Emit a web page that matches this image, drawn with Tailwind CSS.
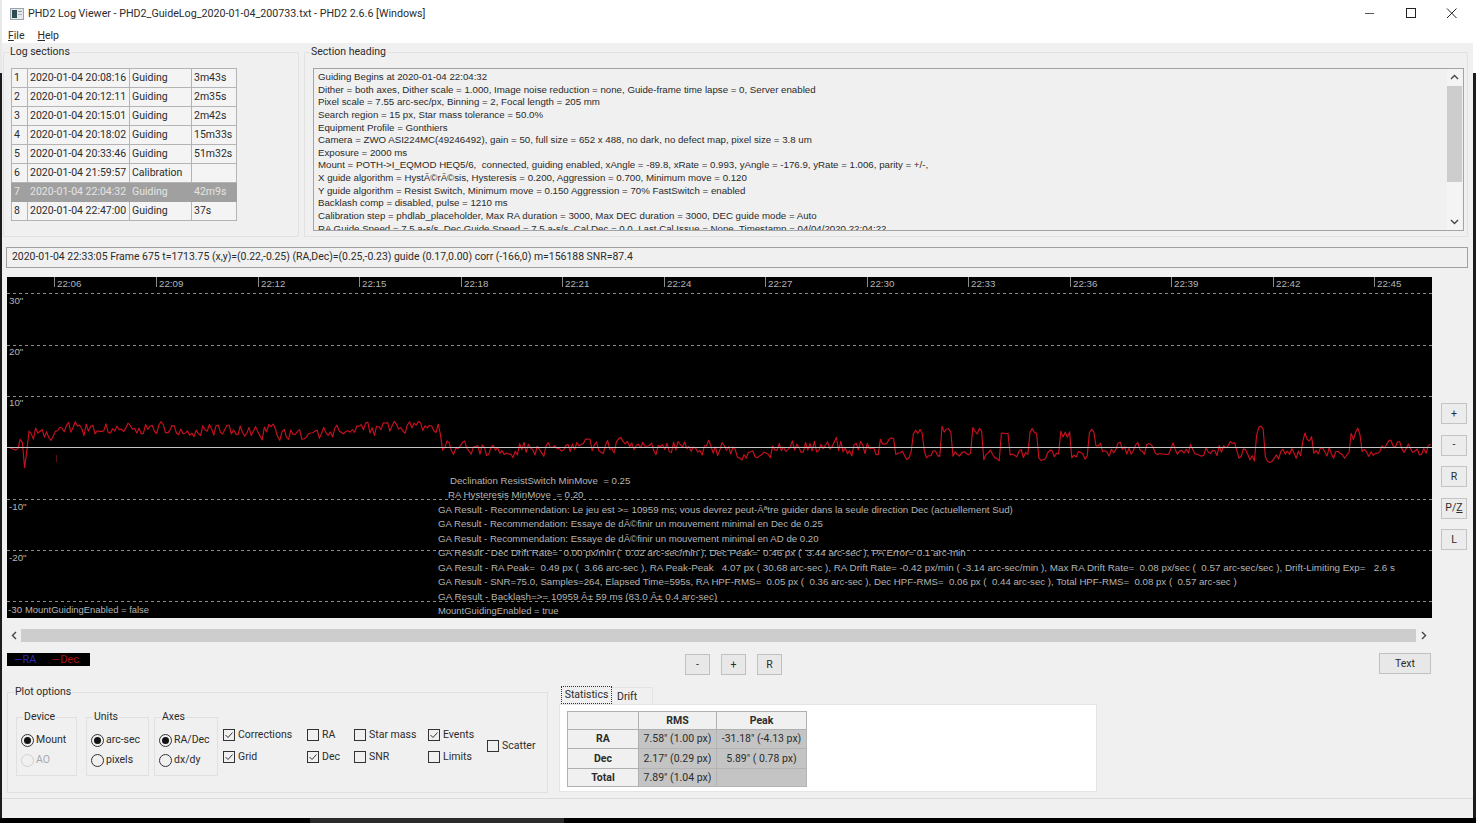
<!DOCTYPE html>
<html lang="en">
<head>
<meta charset="utf-8">
<title>PHD2 Log Viewer</title>
<script src="https://cdn.jsdelivr.net/npm/@tailwindcss/browser@4"></script>
</head>
<body class="m-0 overflow-hidden bg-black">
<div class="w-[1476px] h-[823px] flex flex-col overflow-hidden font-['Roboto','Open_Sans',sans-serif] text-[10.5px] text-[#2c2c2c]">
  <div class="flex h-[818px]">
    <div class="w-[2px] flex flex-col"><div class="h-[73px] bg-[#e8e8e8]"></div><div class="flex-1 bg-[#1c1c1c]"></div></div>
    <div class="w-[1471px] bg-[#f0f0f0] flex flex-col">
      <!-- title bar -->
      <div class="h-[27px] bg-white flex items-center pl-[8px] shrink-0">
        <svg class="w-[14px] h-[12px] mr-[4px]" viewBox="0 0 14 12"><rect x="0.5" y="0.5" width="13" height="11" fill="#e4e8ea" stroke="#9aa4aa"/><rect x="2" y="2" width="5" height="8" fill="#2d4a52"/><rect x="8" y="3" width="4" height="1" fill="#8a98a0"/><rect x="8" y="6" width="4" height="1" fill="#a8b2b8"/></svg>
        <span class="leading-[27px] text-[10.7px]">PHD2 Log Viewer - PHD2_GuideLog_2020-01-04_200733.txt - PHD2 2.6.6 [Windows]</span>
        <div class="ml-auto flex items-center">
          <svg class="w-[11px] h-[11px] mr-[30px]" viewBox="0 0 11 11"><path d="M1 5.5h9" stroke="#555" stroke-width="1"/></svg>
          <svg class="w-[11px] h-[11px] mr-[30px]" viewBox="0 0 11 11"><rect x="1.5" y="0.5" width="9" height="9" fill="none" stroke="#222"/></svg>
          <svg class="w-[11px] h-[11px] mr-[16px]" viewBox="0 0 11 11"><path d="M1 0.5l9.5 9.5M10.5 0.5L1 10" stroke="#222" fill="none"/></svg>
        </div>
      </div>
      <!-- menu -->
      <div class="h-[16px] bg-white flex gap-[13px] pl-[6px] leading-[17px] shrink-0">
        <span><u>F</u>ile</span><span><u>H</u>elp</span>
      </div>
      <!-- sections -->
      <div class="flex mt-[9px] h-[185px] shrink-0 pl-[1px]">
        <div class="relative w-[296px] border border-[#e2e2e2] rounded-[1px]">
          <span class="absolute left-[5px] top-[-8px] bg-[#f0f0f0] px-[1px] leading-[14px]">Log sections</span>
          <table class="absolute left-[7px] top-[15px] border-collapse table-fixed w-[225px] bg-[#f4f4f4] leading-[18px] whitespace-nowrap">
            <colgroup><col class="w-[16px]"><col class="w-[102px]"><col class="w-[62px]"><col class="w-[45px]"></colgroup>
            <tbody>
              <tr class="h-[19px]"><td class="border border-[#b4b4b4] px-[2px]">1</td><td class="border border-[#b4b4b4] px-[2px]">2020-01-04 20:08:16</td><td class="border border-[#b4b4b4] px-[2px]">Guiding</td><td class="border border-[#b4b4b4] px-[2px]">3m43s</td></tr>
              <tr class="h-[19px]"><td class="border border-[#b4b4b4] px-[2px]">2</td><td class="border border-[#b4b4b4] px-[2px]">2020-01-04 20:12:11</td><td class="border border-[#b4b4b4] px-[2px]">Guiding</td><td class="border border-[#b4b4b4] px-[2px]">2m35s</td></tr>
              <tr class="h-[19px]"><td class="border border-[#b4b4b4] px-[2px]">3</td><td class="border border-[#b4b4b4] px-[2px]">2020-01-04 20:15:01</td><td class="border border-[#b4b4b4] px-[2px]">Guiding</td><td class="border border-[#b4b4b4] px-[2px]">2m42s</td></tr>
              <tr class="h-[19px]"><td class="border border-[#b4b4b4] px-[2px]">4</td><td class="border border-[#b4b4b4] px-[2px]">2020-01-04 20:18:02</td><td class="border border-[#b4b4b4] px-[2px]">Guiding</td><td class="border border-[#b4b4b4] px-[2px]">15m33s</td></tr>
              <tr class="h-[19px]"><td class="border border-[#b4b4b4] px-[2px]">5</td><td class="border border-[#b4b4b4] px-[2px]">2020-01-04 20:33:46</td><td class="border border-[#b4b4b4] px-[2px]">Guiding</td><td class="border border-[#b4b4b4] px-[2px]">51m32s</td></tr>
              <tr class="h-[19px]"><td class="border border-[#b4b4b4] px-[2px]">6</td><td class="border border-[#b4b4b4] px-[2px]">2020-01-04 21:59:57</td><td class="border border-[#b4b4b4] px-[2px]">Calibration</td><td class="border border-[#b4b4b4] px-[2px]"></td></tr>
              <tr class="h-[19px] bg-[#a0a0a0] text-[#e4e4e4]"><td class="border border-[#a0a0a0] px-[2px]">7</td><td class="border border-[#a0a0a0] px-[2px]">2020-01-04 22:04:32</td><td class="border border-[#a0a0a0] px-[2px]">Guiding</td><td class="border border-[#a0a0a0] px-[2px]">42m9s</td></tr>
              <tr class="h-[19px]"><td class="border border-[#b4b4b4] px-[2px]">8</td><td class="border border-[#b4b4b4] px-[2px]">2020-01-04 22:47:00</td><td class="border border-[#b4b4b4] px-[2px]">Guiding</td><td class="border border-[#b4b4b4] px-[2px]">37s</td></tr>
            </tbody>
          </table>
        </div>
        <div class="relative ml-[5px] w-[1164px] border border-[#e2e2e2] rounded-[1px]">
          <span class="absolute left-[5px] top-[-8px] bg-[#f0f0f0] px-[1px] leading-[14px]">Section heading</span>
          <div class="absolute left-[8px] top-[15px] w-[1151px] h-[163px] border border-[#a4a4a4] bg-[#f0f0f0] flex overflow-hidden">
            <pre class="flex-1 pl-[4px] pt-[2px] font-['Liberation_Sans',Arial,sans-serif] text-[9.7px] leading-[12.62px] text-[#2a2a2a] overflow-hidden whitespace-pre">Guiding Begins at 2020-01-04 22:04:32
Dither = both axes, Dither scale = 1.000, Image noise reduction = none, Guide-frame time lapse = 0, Server enabled
Pixel scale = 7.55 arc-sec/px, Binning = 2, Focal length = 205 mm
Search region = 15 px, Star mass tolerance = 50.0%
Equipment Profile = Gonthiers
Camera = ZWO ASI224MC(49246492), gain = 50, full size = 652 x 488, no dark, no defect map, pixel size = 3.8 um
Exposure = 2000 ms
Mount = POTH-&gt;I_EQMOD HEQ5/6,  connected, guiding enabled, xAngle = -89.8, xRate = 0.993, yAngle = -176.9, yRate = 1.006, parity = +/-,
X guide algorithm = HystÃ©rÃ©sis, Hysteresis = 0.200, Aggression = 0.700, Minimum move = 0.120
Y guide algorithm = Resist Switch, Minimum move = 0.150 Aggression = 70% FastSwitch = enabled
Backlash comp = disabled, pulse = 1210 ms
Calibration step = phdlab_placeholder, Max RA duration = 3000, Max DEC duration = 3000, DEC guide mode = Auto
RA Guide Speed = 7.5 a-s/s, Dec Guide Speed = 7.5 a-s/s, Cal Dec = 0.0, Last Cal Issue = None, Timestamp = 04/04/2020 22:04:22</pre>
            <div class="w-[15px] mr-[1px] bg-[#f4f4f4] flex flex-col items-center shrink-0">
              <svg class="w-[9px] h-[17px] shrink-0" viewBox="0 0 9 17"><path d="M1 10l3.5-3.5L8 10" fill="none" stroke="#444" stroke-width="1.4"/></svg>
              <div class="w-full h-[96px] bg-[#cdcdcd]"></div>
              <svg class="w-[9px] h-[17px] mt-auto shrink-0" viewBox="0 0 9 17"><path d="M1 7l3.5 3.5L8 7" fill="none" stroke="#444" stroke-width="1.4"/></svg>
            </div>
          </div>
        </div>
      </div>
      <!-- status line -->
      <div class="mt-[10px] ml-[4px] w-[1462px] h-[21px] shrink-0 border border-[#a0a0a0] pl-[5px] leading-[18px] whitespace-pre text-[10.45px]">2020-01-04 22:33:05 Frame 675 t=1713.75 (x,y)=(0.22,-0.25) (RA,Dec)=(0.25,-0.23) guide (0.17,0.00) corr (-166,0) m=156188 SNR=87.4</div>
      <!-- chart row -->
      <div class="flex mt-[9px] h-[341px] shrink-0 pl-[5px]">
        <div class="relative w-[1425px] h-[341px] bg-black overflow-hidden font-['Liberation_Sans',Arial,sans-serif] text-[9.75px] leading-[14px] text-[#b4b4b4] whitespace-pre">
          <svg class="absolute inset-0 w-[1425px] h-[341px]" viewBox="0 0 1425 341">
            <g stroke="#8c8c8c" stroke-dasharray="3 3" stroke-width="1">
              <path d="M0 16.5H1425"/><path d="M0 68.5H1425"/><path d="M0 119.5H1425"/><path d="M0 222.5H1425"/><path d="M0 273.5H1425"/><path d="M0 324.5H1425"/>
            </g>
            <path d="M49.5 178v7" stroke="#5a1010" stroke-width="1"/>
            <polyline id="dec" fill="none" stroke="#c8101e" stroke-width="1.15" stroke-linejoin="round"/>
            <path d="M0 170.5H1425" stroke="#c4c4c4" stroke-width="1"/>
          </svg>
          <div class="absolute top-0 left-[47px] h-[10px] border-l border-[#8a8a8a] pl-[2px]">22:06</div>
          <div class="absolute top-0 left-[149px] h-[10px] border-l border-[#8a8a8a] pl-[2px]">22:09</div>
          <div class="absolute top-0 left-[251px] h-[10px] border-l border-[#8a8a8a] pl-[2px]">22:12</div>
          <div class="absolute top-0 left-[352px] h-[10px] border-l border-[#8a8a8a] pl-[2px]">22:15</div>
          <div class="absolute top-0 left-[454px] h-[10px] border-l border-[#8a8a8a] pl-[2px]">22:18</div>
          <div class="absolute top-0 left-[555px] h-[10px] border-l border-[#8a8a8a] pl-[2px]">22:21</div>
          <div class="absolute top-0 left-[657px] h-[10px] border-l border-[#8a8a8a] pl-[2px]">22:24</div>
          <div class="absolute top-0 left-[758px] h-[10px] border-l border-[#8a8a8a] pl-[2px]">22:27</div>
          <div class="absolute top-0 left-[860px] h-[10px] border-l border-[#8a8a8a] pl-[2px]">22:30</div>
          <div class="absolute top-0 left-[961px] h-[10px] border-l border-[#8a8a8a] pl-[2px]">22:33</div>
          <div class="absolute top-0 left-[1063px] h-[10px] border-l border-[#8a8a8a] pl-[2px]">22:36</div>
          <div class="absolute top-0 left-[1164px] h-[10px] border-l border-[#8a8a8a] pl-[2px]">22:39</div>
          <div class="absolute top-0 left-[1266px] h-[10px] border-l border-[#8a8a8a] pl-[2px]">22:42</div>
          <div class="absolute top-0 left-[1367px] h-[10px] border-l border-[#8a8a8a] pl-[2px]">22:45</div>
          <div class="absolute left-[2px] top-[17px]">30"</div>
          <div class="absolute left-[2px] top-[68px]">20"</div>
          <div class="absolute left-[2px] top-[119px]">10"</div>
          <div class="absolute left-[2px] top-[223px]">-10"</div>
          <div class="absolute left-[2px] top-[274px]">-20"</div>
          <div class="absolute left-[1px] top-[326px] w-[17px] overflow-hidden">-30</div>
          <div class="absolute left-[18px] top-[326px] text-[9.45px]">MountGuidingEnabled = false</div>
          <div class="absolute left-[443px] top-[197px] text-[9.68px]">Declination ResistSwitch MinMove  = 0.25</div>
          <div class="absolute left-[441px] top-[211px] text-[9.7px]">RA Hysteresis MinMove  = 0.20</div>
          <div class="absolute left-[431px] top-[226px] leading-[14.42px] whitespace-normal w-[990px]">
            <div class="whitespace-pre text-[9.76px]">GA Result - Recommendation: Le jeu est &gt;= 10959 ms; vous devrez peut-Ãªtre guider dans la seule direction Dec (actuellement Sud)</div>
            <div class="whitespace-pre text-[9.65px]">GA Result - Recommendation: Essaye de dÃ©finir un mouvement minimal en Dec de 0.25</div>
            <div class="whitespace-pre text-[9.65px]">GA Result - Recommendation: Essaye de dÃ©finir un mouvement minimal en AD de 0.20</div>
            <div class="whitespace-pre text-[9.8px]">GA Result - Dec Drift Rate=  0.00 px/min (  0.02 arc-sec/min ), Dec Peak=  0.46 px (  3.44 arc-sec ), PA Error= 0.1 arc-min</div>
            <div class="whitespace-pre text-[9.84px]">GA Result - RA Peak=  0.49 px (  3.66 arc-sec ), RA Peak-Peak   4.07 px ( 30.68 arc-sec ), RA Drift Rate= -0.42 px/min ( -3.14 arc-sec/min ), Max RA Drift Rate=  0.08 px/sec (  0.57 arc-sec/sec ), Drift-Limiting Exp=   2.6 s</div>
            <div class="whitespace-pre text-[9.68px]">GA Result - SNR=75.0, Samples=264, Elapsed Time=595s, RA HPF-RMS=  0.05 px (  0.36 arc-sec ), Dec HPF-RMS=  0.06 px (  0.44 arc-sec ), Total HPF-RMS=  0.08 px (  0.57 arc-sec )</div>
            <div class="whitespace-pre text-[9.86px]">GA Result - Backlash=&gt;= 10959 Â± 59 ms (83.0 Â± 0.4 arc-sec)</div>
            <div class="whitespace-pre text-[9.45px]">MountGuidingEnabled = true</div>
          </div>
        </div>
        <div class="ml-[9px] pt-[126px] flex flex-col gap-[10.5px]">
          <button class="w-[26px] h-[21px] border border-[#c4c4c4] bg-[#ececec] leading-[18px]">+</button>
          <button class="w-[26px] h-[21px] border border-[#c4c4c4] bg-[#ececec] leading-[18px]">-</button>
          <button class="w-[26px] h-[21px] border border-[#c4c4c4] bg-[#ececec] leading-[18px]">R</button>
          <button class="w-[26px] h-[21px] border border-[#c4c4c4] bg-[#ececec] leading-[18px]">P/<u>Z</u></button>
          <button class="w-[26px] h-[21px] border border-[#c4c4c4] bg-[#ececec] leading-[18px]">L</button>
        </div>
      </div>
      <!-- horizontal scrollbar -->
      <div class="mt-[11px] ml-[5px] w-[1425px] h-[13px] flex items-center shrink-0">
        <svg class="w-[14px] h-[13px] shrink-0" viewBox="0 0 14 13"><path d="M9 3L5.5 6.5 9 10" fill="none" stroke="#444" stroke-width="1.4"/></svg>
        <div class="w-[1395px] h-[13px] bg-[#cdcdcd]"></div>
        <svg class="w-[16px] h-[13px] shrink-0" viewBox="0 0 16 13"><path d="M6 3l3.5 3.5L6 10" fill="none" stroke="#444" stroke-width="1.4"/></svg>
      </div>
      <!-- legend + buttons -->
      <div class="flex mt-[11px] h-[24px] shrink-0 pl-[5px]">
        <div class="w-[83px] h-[13px] bg-black flex gap-[15px] pl-[7px] text-[11px] leading-[13px]">
          <span class="text-[#2a2ab4]">—RA</span><span class="text-[#a81010]">—Dec</span>
        </div>
        <button class="ml-[595px] mt-[1px] w-[25px] h-[21px] border border-[#c0c0c0] bg-[#e8e8e8] leading-[18px]">-</button>
        <button class="ml-[11px] mt-[1px] w-[25px] h-[21px] border border-[#c0c0c0] bg-[#e8e8e8] leading-[18px]">+</button>
        <button class="ml-[11px] mt-[1px] w-[25px] h-[21px] border border-[#c0c0c0] bg-[#e8e8e8] leading-[18px]">R</button>
        <button class="ml-[597px] w-[52px] h-[21px] border border-[#c0c0c0] bg-[#e8e8e8] leading-[18px]">Text</button>
      </div>
      <!-- lower row -->
      <div class="flex mt-[9px] h-[107px] shrink-0 pl-[5px]">
        <!-- plot options -->
        <div class="relative mt-[6px] w-[541px] h-[101px] border border-[#e0e0e0]">
          <span class="absolute left-[6px] top-[-8px] bg-[#f0f0f0] px-[1px] leading-[14px]">Plot options</span>
          <div class="absolute left-[8px] top-[24px] flex items-start">
            <div class="relative w-[61px] h-[59px] border border-[#e0e0e0] flex flex-col gap-[4px] pl-[4px] pt-[14px]">
              <span class="absolute left-[6px] top-[-8px] bg-[#f0f0f0] px-[1px] leading-[14px]">Device</span>
              <label class="flex items-center gap-[2px] h-[16px]"><span class="w-[13px] h-[13px] rounded-full border border-[#333] flex items-center justify-center"><span class="w-[7px] h-[7px] rounded-full bg-[#111]"></span></span>Mount</label>
              <label class="flex items-center gap-[2px] h-[16px] text-[#a8a8a8]"><span class="w-[13px] h-[13px] rounded-full border border-[#d0d0d0]"></span>AO</label>
            </div>
            <div class="relative ml-[9px] w-[63px] h-[59px] border border-[#e0e0e0] flex flex-col gap-[4px] pl-[4px] pt-[14px]">
              <span class="absolute left-[6px] top-[-8px] bg-[#f0f0f0] px-[1px] leading-[14px]">Units</span>
              <label class="flex items-center gap-[2px] h-[16px]"><span class="w-[13px] h-[13px] rounded-full border border-[#333] flex items-center justify-center"><span class="w-[7px] h-[7px] rounded-full bg-[#111]"></span></span>arc-sec</label>
              <label class="flex items-center gap-[2px] h-[16px]"><span class="w-[13px] h-[13px] rounded-full border border-[#333]"></span>pixels</label>
            </div>
            <div class="relative ml-[5px] w-[64px] h-[59px] border border-[#e0e0e0] flex flex-col gap-[4px] pl-[4px] pt-[14px]">
              <span class="absolute left-[6px] top-[-8px] bg-[#f0f0f0] px-[1px] leading-[14px]">Axes</span>
              <label class="flex items-center gap-[2px] h-[16px]"><span class="w-[13px] h-[13px] rounded-full border border-[#333] flex items-center justify-center"><span class="w-[7px] h-[7px] rounded-full bg-[#111]"></span></span>RA/Dec</label>
              <label class="flex items-center gap-[2px] h-[16px]"><span class="w-[13px] h-[13px] rounded-full border border-[#333]"></span>dx/dy</label>
            </div>
            <div class="ml-[5px] w-[84px] pt-[10px] flex flex-col gap-[6px]">
              <label class="flex items-center gap-[3px] h-[16px]"><svg class="w-[12px] h-[12px]" viewBox="0 0 12 12"><rect x="0.5" y="0.5" width="11" height="11" fill="none" stroke="#333"/><path d="M2.5 6l2.5 2.5 4.5-5" fill="none" stroke="#333"/></svg>Corrections</label>
              <label class="flex items-center gap-[3px] h-[16px]"><svg class="w-[12px] h-[12px]" viewBox="0 0 12 12"><rect x="0.5" y="0.5" width="11" height="11" fill="none" stroke="#333"/><path d="M2.5 6l2.5 2.5 4.5-5" fill="none" stroke="#333"/></svg>Grid</label>
            </div>
            <div class="w-[47px] pt-[10px] flex flex-col gap-[6px]">
              <label class="flex items-center gap-[3px] h-[16px]"><span class="w-[12px] h-[12px] border border-[#333]"></span>RA</label>
              <label class="flex items-center gap-[3px] h-[16px]"><svg class="w-[12px] h-[12px]" viewBox="0 0 12 12"><rect x="0.5" y="0.5" width="11" height="11" fill="none" stroke="#333"/><path d="M2.5 6l2.5 2.5 4.5-5" fill="none" stroke="#333"/></svg>Dec</label>
            </div>
            <div class="w-[74px] pt-[10px] flex flex-col gap-[6px]">
              <label class="flex items-center gap-[3px] h-[16px]"><span class="w-[12px] h-[12px] border border-[#333]"></span>Star mass</label>
              <label class="flex items-center gap-[3px] h-[16px]"><span class="w-[12px] h-[12px] border border-[#333]"></span>SNR</label>
            </div>
            <div class="w-[59px] pt-[10px] flex flex-col gap-[6px]">
              <label class="flex items-center gap-[3px] h-[16px]"><svg class="w-[12px] h-[12px]" viewBox="0 0 12 12"><rect x="0.5" y="0.5" width="11" height="11" fill="none" stroke="#333"/><path d="M2.5 6l2.5 2.5 4.5-5" fill="none" stroke="#333"/></svg>Events</label>
              <label class="flex items-center gap-[3px] h-[16px]"><span class="w-[12px] h-[12px] border border-[#333]"></span>Limits</label>
            </div>
            <div class="pt-[21px]">
              <label class="flex items-center gap-[3px] h-[16px]"><span class="w-[12px] h-[12px] border border-[#333]"></span>Scatter</label>
            </div>
          </div>
        </div>
        <!-- stats -->
        <div class="ml-[11px] w-[538px] flex flex-col">
          <div class="flex h-[18px] items-end">
            <div class="ml-[2px] w-[51px] h-[18px] border border-dotted border-[#333] text-center leading-[15px] bg-[#f0f0f0]">Statistics</div>
            <div class="w-[41px] h-[17px] bg-[#f0f0f0] border-t border-r border-[#e4e4e4] pl-[5px] leading-[17px]">Drift</div>
          </div>
          <div class="bg-white w-[538px] h-[88px] pl-[7px] pt-[6px] border border-[#e4e4e4]">
            <table class="border-collapse table-fixed w-[239px] text-center leading-[16px] whitespace-nowrap">
              <colgroup><col class="w-[71px]"><col class="w-[78px]"><col class="w-[90px]"></colgroup>
              <tbody>
                <tr class="h-[18px] bg-[#f0f0f0] font-bold"><td class="border border-[#b0b0b0]"></td><td class="border border-[#b0b0b0]">RMS</td><td class="border border-[#b0b0b0]">Peak</td></tr>
                <tr class="h-[19px]"><td class="border border-[#b0b0b0] bg-[#f0f0f0] font-bold">RA</td><td class="border border-[#b4b4b4] bg-[#c4c4c4] whitespace-pre">7.58" (1.00 px)</td><td class="border border-[#b4b4b4] bg-[#c4c4c4] whitespace-pre">-31.18" (-4.13 px)</td></tr>
                <tr class="h-[20px]"><td class="border border-[#b0b0b0] bg-[#f0f0f0] font-bold">Dec</td><td class="border border-[#b4b4b4] bg-[#c4c4c4] whitespace-pre">2.17" (0.29 px)</td><td class="border border-[#b4b4b4] bg-[#c4c4c4] whitespace-pre">5.89" ( 0.78 px)</td></tr>
                <tr class="h-[18px]"><td class="border border-[#b0b0b0] bg-[#f0f0f0] font-bold">Total</td><td class="border border-[#b4b4b4] bg-[#c4c4c4] whitespace-pre">7.89" (1.04 px)</td><td class="border border-[#b4b4b4] bg-[#c4c4c4]"></td></tr>
              </tbody>
            </table>
          </div>
        </div>
      </div>
      <div class="mt-[5px] border-t border-[#dcdcdc]"></div>
    </div>
    <div class="w-[3px] flex flex-col"><div class="h-[73px] bg-white"></div><div class="flex-1 bg-[#1c1c1c]"></div></div>
  </div>
  <div class="h-[5px] flex"><div class="w-[310px] bg-black"></div><div class="w-[254px] bg-[#2a2a2a]"></div><div class="flex-1 bg-black"></div></div>
</div>
<script>
(function () {
  var seed = 12345;
  function r() { seed = (seed * 1664525 + 1013904223) % 4294967296; return seed / 4294967296 - 0.5; }
  var pulses = [[914,923,431],[941,950,428],[973,981,429],[1001,1008,431],[1030,1037,433],[1060,1070,433],[1089,1095,431],[1256,1264,431],[1302,1312,436],[1352,1360,434]];
  function lerp(a, b, t) { return a + (b - a) * t; }
  function level(x) {
    for (var i = 0; i < pulses.length; i++) {
      var p = pulses[i];
      if (x >= p[0] - 1 && x <= p[1] + 1) return p[2];
    }
    if (x < 18) return 449;
    if (x < 22) return lerp(449, 432, (x - 18) / 4);
    if (x < 25) return lerp(438, 472, (x - 22) / 3);
    if (x < 28) return lerp(472, 436, (x - 25) / 3);
    if (x < 120) return lerp(432, 427, (x - 28) / 92);
    if (x < 300) return lerp(427, 432, (x - 120) / 180);
    if (x < 330) return 433;
    if (x < 439) return lerp(432, 428, (x - 330) / 109);
    if (x < 445) return lerp(428, 452, (x - 439) / 6);
    if (x < 640) return 447 + 2 * Math.sin(x / 37);
    if (x < 880) return 449 + 2.5 * Math.sin(x / 23);
    if (x < 895) return 441;
    if (x < 1095) return 455;
    if (x < 1228) return 449;
    if (x < 1236) return 441;
    if (x < 1302) return 454;
    if (x < 1352) return 452;
    if (x < 1380) return 450;
    if (x < 1400) return 446;
    return 450;
  }
  function amp(x) {
    if (x < 30) return 3;
    if (x < 440) return 17;
    if (x < 880) return 18;
    if (x < 1100) return 11;
    return 15;
  }
  var pts = [], prev = 0;
  for (var x = 7; x <= 1432; x += 2.2) {
    prev = prev * 0.35 + r() * 0.85;
    var y = level(x) + prev * amp(x);
    pts.push((x - 7).toFixed(1) + ',' + (y - 277).toFixed(1));
  }
  document.getElementById('dec').setAttribute('points', pts.join(' '));
})();
</script>
</body>
</html>
